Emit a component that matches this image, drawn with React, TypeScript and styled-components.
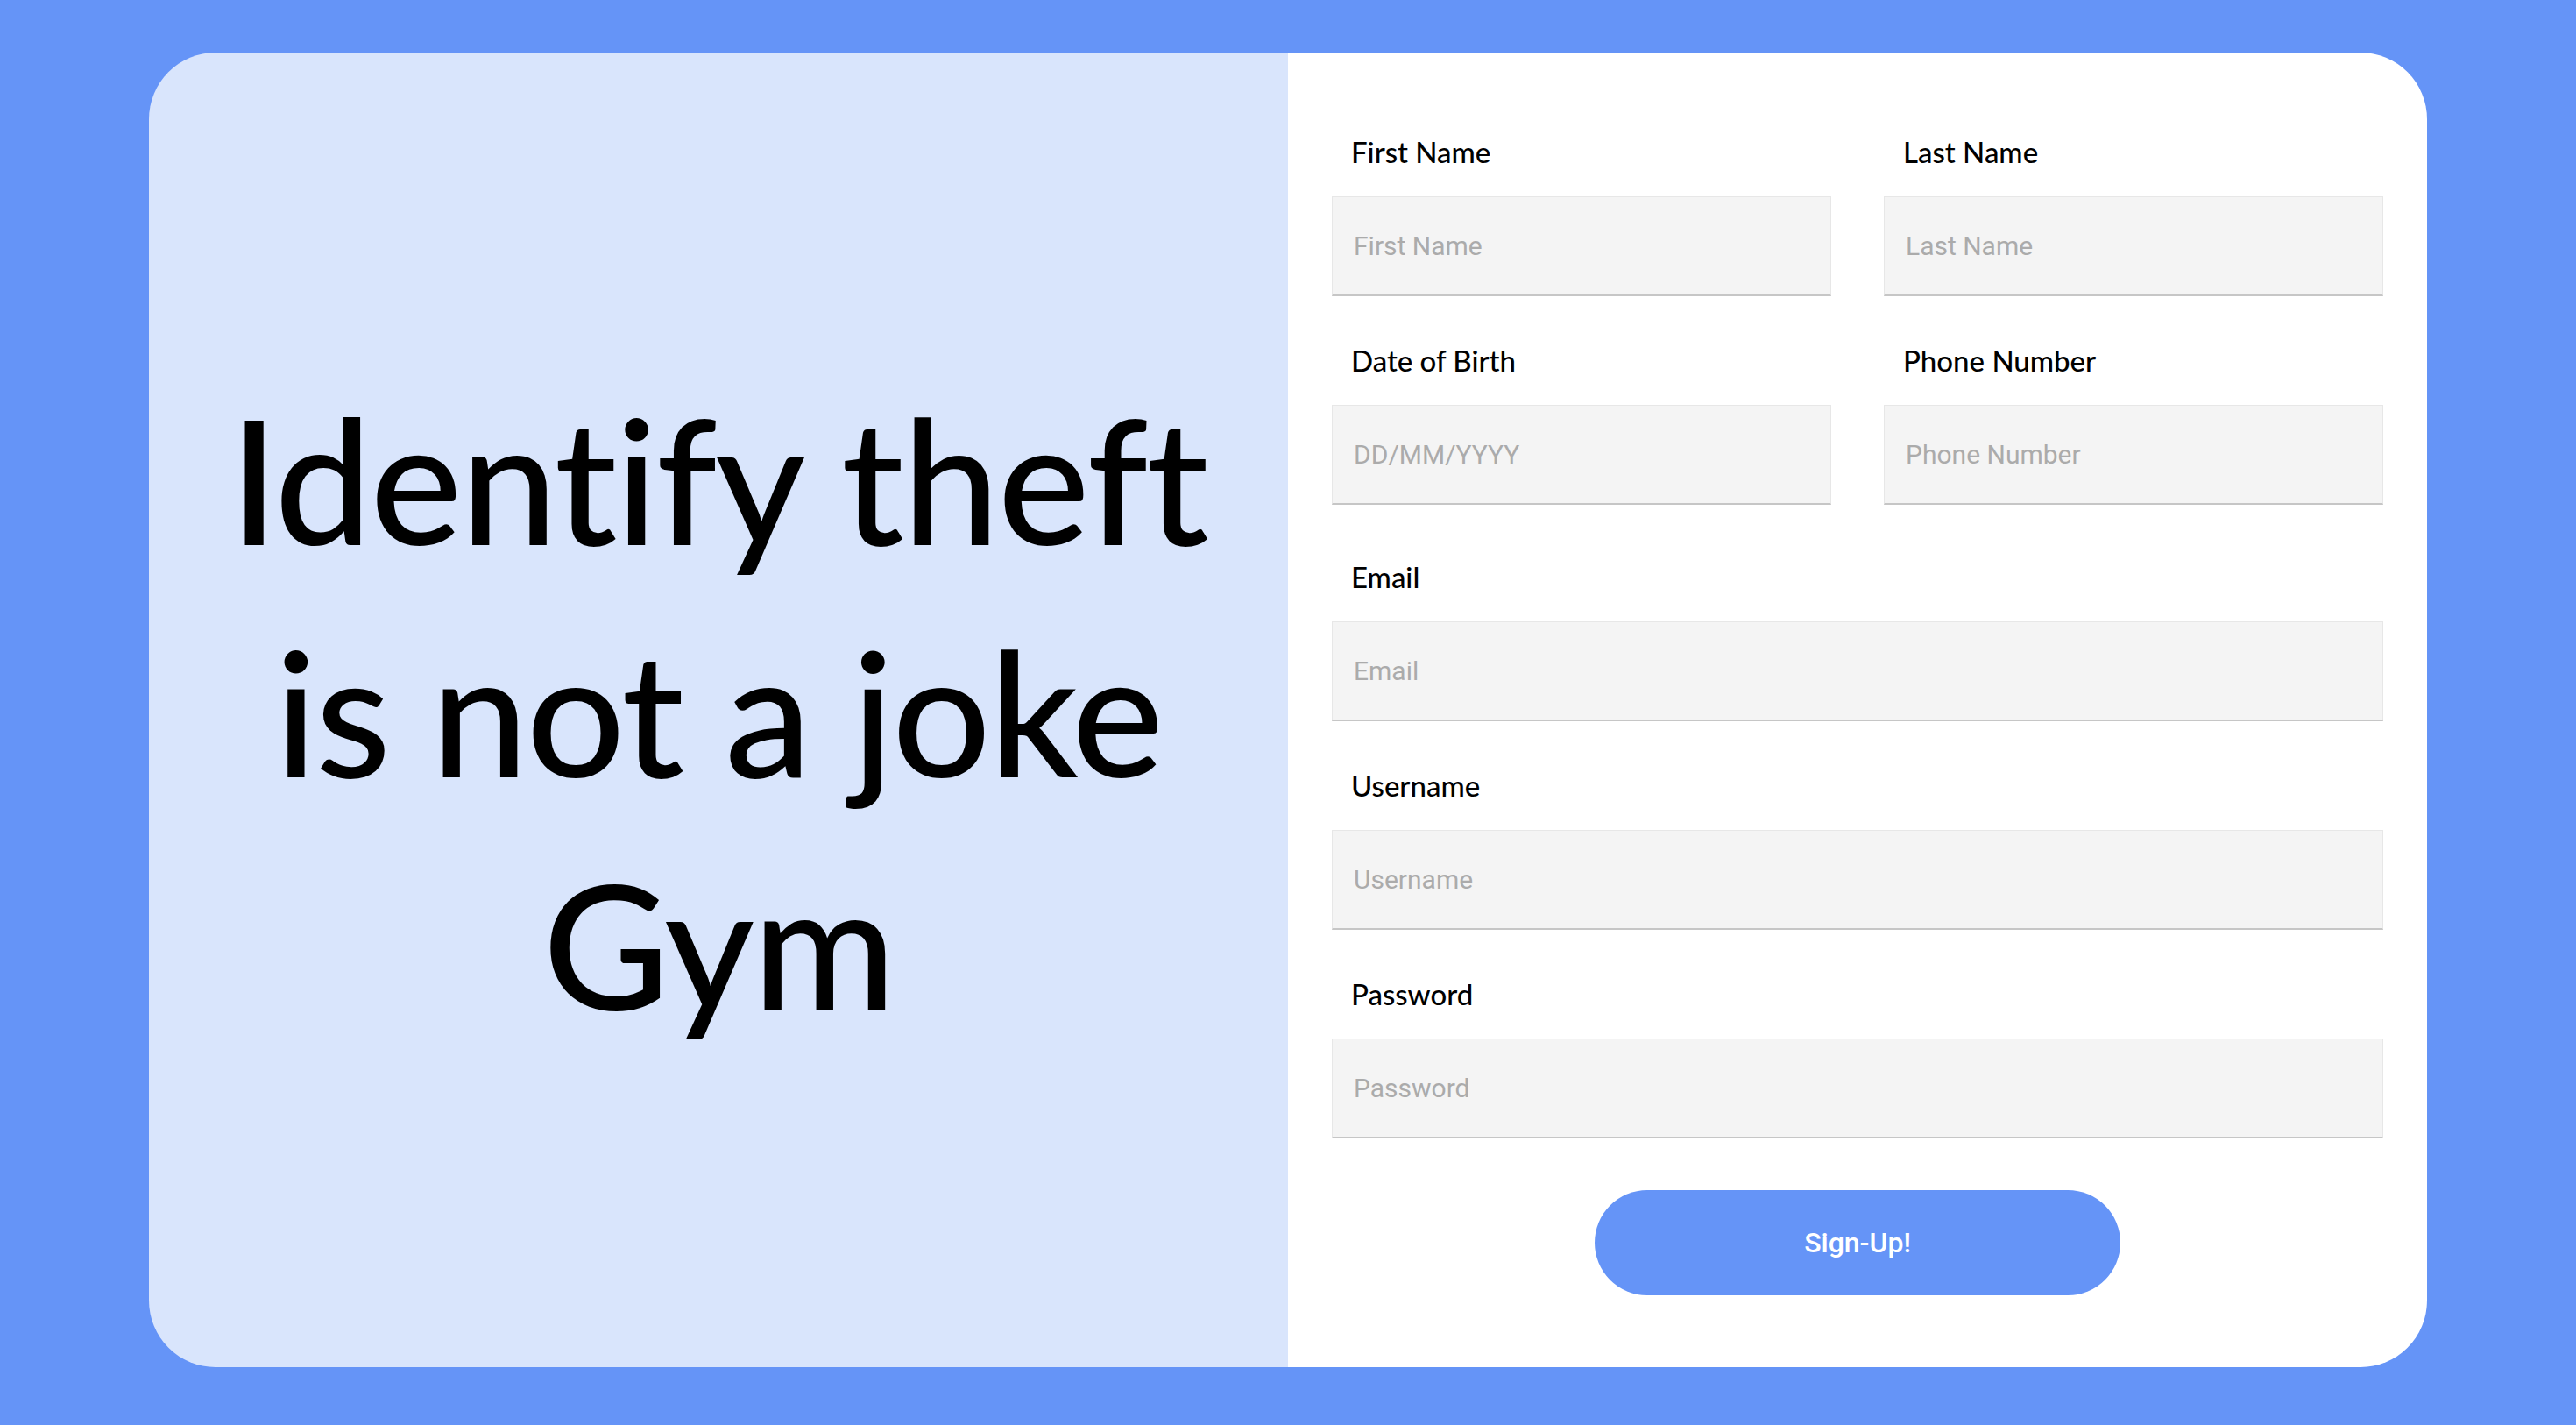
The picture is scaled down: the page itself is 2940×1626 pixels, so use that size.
import React from 'react';
import styled, { createGlobalStyle } from 'styled-components';

const blue = '#6594f7';
const paleBlue = '#d9e5fc';
const white = '#ffffff';
const black = '#000000';

const GlobalStyle = createGlobalStyle`
  html, body {
    margin: 0;
    padding: 0;
    background-color: ${blue};
  }
  * {
    box-sizing: border-box;
  }
`;

const Page = styled.div`
  width: 100%;
  height: 100vh;
  padding: 60px 170px 66px;
  background-color: ${blue};
`;

const Card = styled.div`
  display: flex;
  width: 100%;
  height: 1500px;
  border-radius: 76px;
  overflow: hidden;
`;

const Hero = styled.div`
  flex: 0 0 50%;
  min-width: 0;
  display: flex;
  justify-content: center;
  align-items: center;
  background-color: ${paleBlue};
`;

const Headline = styled.h1`
  margin: 0;
  font-family: 'Lato', 'Liberation Sans', sans-serif;
  font-weight: 500;
  font-size: 198px;
  line-height: 265px;
  letter-spacing: -2px;
  font-variant-ligatures: none;
  text-align: center;
  white-space: nowrap;
  color: ${black};
`;

const FormPanel = styled.form`
  flex: 0 0 50%;
  min-width: 0;
  display: flex;
  flex-direction: column;
  padding: 93px 50px 0;
  background-color: ${white};
`;

const Grid = styled.div`
  display: grid;
  grid-template-columns: 1fr 1fr;
  column-gap: 60px;
  row-gap: 53px;
`;

const Stack = styled.div`
  display: flex;
  flex-direction: column;
  gap: 53px;
  margin-top: 62px;
`;

const Field = styled.div`
  display: flex;
  flex-direction: column;
  gap: 31px;
`;

const Label = styled.label`
  padding-left: 22px;
  font-family: 'Lato', 'Liberation Sans', sans-serif;
  font-weight: 500;
  font-size: 33px;
  line-height: 40px;
  color: ${black};
`;

const Input = styled.input`
  width: 100%;
  height: 114px;
  padding: 0 24px;
  border: 1px solid #e7e7e7;
  border-bottom: 2px solid #c6c6c6;
  border-radius: 0;
  background-color: #f4f4f4;
  font-family: 'Roboto', 'Liberation Sans', sans-serif;
  font-size: 30px;
  color: #333;
  outline: none;

  &::placeholder {
    color: #ababab;
  }
`;

const SubmitButton = styled.button`
  align-self: center;
  width: 600px;
  height: 120px;
  margin-top: 59px;
  border: none;
  border-radius: 60px;
  background-color: ${blue};
  color: ${white};
  font-family: 'Roboto', 'Liberation Sans', sans-serif;
  font-weight: 500;
  font-size: 32px;
  cursor: pointer;
`;

type FieldProps = {
  id: string;
  label: string;
  placeholder: string;
  type?: string;
};

function FormField({ id, label, placeholder, type = 'text' }: FieldProps) {
  return (
    <Field>
      <Label htmlFor={id}>{label}</Label>
      <Input id={id} type={type} placeholder={placeholder} />
    </Field>
  );
}

function App() {
  return (
    <>
      <GlobalStyle />
      <Page>
        <Card>
          <Hero>
            <Headline>
              Identify theft
              <br />
              is not a joke
              <br />
              Gym
            </Headline>
          </Hero>
          <FormPanel onSubmit={(e) => e.preventDefault()}>
            <Grid>
              <FormField id="firstName" label="First Name" placeholder="First Name" />
              <FormField id="lastName" label="Last Name" placeholder="Last Name" />
              <FormField id="dob" label="Date of Birth" placeholder="DD/MM/YYYY" />
              <FormField id="phone" label="Phone Number" placeholder="Phone Number" type="tel" />
            </Grid>
            <Stack>
              <FormField id="email" label="Email" placeholder="Email" type="email" />
              <FormField id="username" label="Username" placeholder="Username" />
              <FormField id="password" label="Password" placeholder="Password" type="password" />
            </Stack>
            <SubmitButton type="submit">Sign-Up!</SubmitButton>
          </FormPanel>
        </Card>
      </Page>
    </>
  );
}

export default App;
